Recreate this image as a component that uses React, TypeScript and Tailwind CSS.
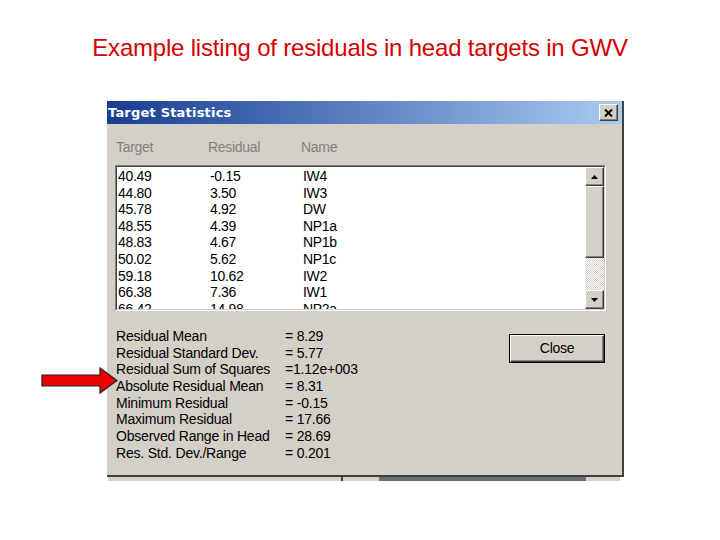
import React from 'react';

const rows = [
  ['40.49', '-0.15', 'IW4'],
  ['44.80', '3.50', 'IW3'],
  ['45.78', '4.92', 'DW'],
  ['48.55', '4.39', 'NP1a'],
  ['48.83', '4.67', 'NP1b'],
  ['50.02', '5.62', 'NP1c'],
  ['59.18', '10.62', 'IW2'],
  ['66.38', '7.36', 'IW1'],
  ['66.42', '14.98', 'NP2a'],
];

const stats = [
  ['Residual Mean', '= 8.29'],
  ['Residual Standard Dev.', '= 5.77'],
  ['Residual Sum of Squares', '=1.12e+003'],
  ['Absolute Residual Mean', '= 8.31'],
  ['Minimum Residual', '= -0.15'],
  ['Maximum Residual', '= 17.66'],
  ['Observed Range in Head', '= 28.69'],
  ['Res. Std. Dev./Range', '= 0.201'],
];

// raised win98 style edge
const raised =
  'border-t border-l border-t-white border-l-white border-b border-r border-b-[#404040] border-r-[#404040] shadow-[inset_-1px_-1px_0_#808080]';

const App: React.FC = () => {
  return (
    <div className="relative w-[720px] h-[540px] bg-white overflow-hidden" style={{ fontFamily: '"Liberation Sans", Arial, sans-serif' }}>
      {/* Slide heading */}
      <h1 className="pt-[34px] h-[101px] text-center text-[24px] leading-[28px] text-[#d40000] tracking-[-0.2px]">
        Example listing of residuals in head targets in GWV
      </h1>

      {/* Dialog */}
      <div className="ml-[107px] w-[517px] bg-[#d4d0c8] border-r-2 border-b-2 border-[#404040]">
        {/* Title bar */}
        <div className="h-[23px] flex items-center justify-between bg-gradient-to-r from-[#1a3c92] to-[#a9cbf1] pl-[1px] pr-[4px]">
          <span className="text-white font-bold text-[13px] tracking-[0.2px]" style={{ fontFamily: '"DejaVu Sans", Verdana, sans-serif' }}>
            Target Statistics
          </span>
          <div className={`w-[19px] h-[17px] bg-[#d4d0c8] flex items-center justify-center ${raised}`}>
            <svg width="9" height="8" viewBox="0 0 9 8">
              <path d="M1 0.5 L8 7.5 M8 0.5 L1 7.5" stroke="#000" strokeWidth="2" />
            </svg>
          </div>
        </div>

        {/* Column headers */}
        <div className="mt-[15px] h-[16px] flex text-[14px] leading-[16px] text-[#808080] tracking-[-0.3px]">
          <span className="ml-[9px] w-[92px]">Target</span>
          <span className="w-[93px]">Residual</span>
          <span>Name</span>
        </div>

        {/* List box */}
        <div className="mt-[10px] ml-[8px] w-[491px] h-[146px] border-t border-l border-[#808080] border-b border-r border-b-white border-r-white">
          <div className="h-full flex border-t border-l border-[#404040] border-b border-r border-b-[#d4d0c8] border-r-[#d4d0c8] bg-white">
            <div className="flex-1 overflow-hidden pt-[1px] text-[14px] leading-[16.6px] text-black tracking-[-0.3px]">
              {rows.map((r) => (
                <div key={r[0]} className="flex h-[16.6px]">
                  <span className="ml-[1px] w-[92px]">{r[0]}</span>
                  <span className="w-[93px]">{r[1]}</span>
                  <span>{r[2]}</span>
                </div>
              ))}
            </div>
            {/* Scrollbar */}
            <div className="w-[19px] flex flex-col bg-white">
              <div className={`h-[19px] bg-[#d4d0c8] flex items-center justify-center ${raised}`}>
                <svg width="7" height="4" viewBox="0 0 7 4">
                  <path d="M3.5 0 L7 4 L0 4 Z" fill="#000" />
                </svg>
              </div>
              <div className={`h-[72px] bg-[#d4d0c8] ${raised}`} />
              <div className="flex-1 bg-[repeating-conic-gradient(#d4d0c8_0_25%,#ffffff_0_50%)] bg-[length:2px_2px]" />
              <div className={`h-[19px] bg-[#d4d0c8] flex items-center justify-center ${raised}`}>
                <svg width="7" height="4" viewBox="0 0 7 4">
                  <path d="M0 0 L7 0 L3.5 4 Z" fill="#000" />
                </svg>
              </div>
            </div>
          </div>
        </div>

        {/* Stats + Close */}
        <div className="mt-[17px] flex pb-[13px]">
          <div className="ml-[9px] flex flex-col text-[14px] leading-[16.7px] text-black tracking-[-0.2px]">
            {stats.map((s) => (
              <div key={s[0]} className="flex h-[16.7px]">
                <span className="w-[169px]">{s[0]}</span>
                <span>{s[1]}</span>
              </div>
            ))}
          </div>
          <div className="ml-auto mr-[17px] mt-[6px] w-[96px] h-[29px] border border-black">
            <div className={`h-full bg-[#d4d0c8] flex items-center justify-center text-[14px] text-black tracking-[-0.3px] ${raised}`}>
              Close
            </div>
          </div>
        </div>
      </div>

      {/* Window behind the dialog, peeking out below */}
      <div className="ml-[108px] w-[512px] h-[4px] flex bg-[#d4d0c8]">
        <div className="ml-[233px] w-[2px] bg-[#404040]" />
        <div className="ml-[36px] w-[207px] bg-[#6e6e6e]" />
      </div>

      {/* Red pointer arrow */}
      <svg className="absolute left-[40px] top-[367px]" width="80" height="28" viewBox="0 0 80 28">
        <path d="M2 8 L60 8 L60 1 L77 13.5 L60 26 L60 19 L2 19 Z" fill="#ee0000" stroke="#202020" strokeWidth="1.2" />
      </svg>
    </div>
  );
};

export default App;
